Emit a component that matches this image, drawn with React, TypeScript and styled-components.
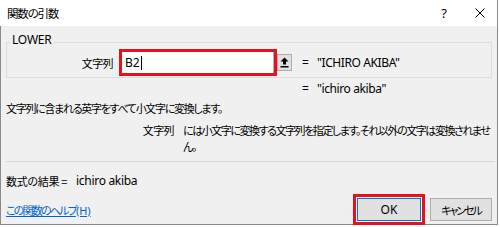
import React from "react";
import styled, { createGlobalStyle } from "styled-components";

const Global = createGlobalStyle`
  html, body { margin: 0; padding: 0; background: #ffffff; }
  body {
    font-family: "Noto Sans", "Noto Sans CJK JP", sans-serif;
    font-size: 12px;
    color: #000;
  }
`;

const jp = `
  font-family: "Noto Sans CJK JP", "Noto Sans", sans-serif;
  font-feature-settings: "palt";
  font-size: 11px;
`;

const Window = styled.div`
  width: 498px;
  height: 225px;
  box-sizing: border-box;
  display: flex;
  flex-direction: column;
  border-right: 1px solid #8a8a8a;
  border-bottom: 1px solid #8a8a8a;
  background: #f0f0f0;
`;

const TitleBar = styled.div`
  height: 26px;
  flex: none;
  display: flex;
  align-items: center;
  background: #fff;
  padding-left: 7px;
`;

const Title = styled.div`
  ${jp}
  font-size: 11.5px;
  letter-spacing: -1.2px;
  line-height: 14px;
  flex: 1;
`;

const HelpGlyph = styled.div`
  width: 28px;
  margin-right: 5px;
  text-align: center;
  font-size: 13px;
  line-height: 14px;
`;

const CloseBtn = styled.div`
  width: 34px;
  height: 26px;
  display: flex;
  align-items: center;
  justify-content: center;
`;

const Content = styled.div`
  flex: 1;
  border-left: 1px solid #8a8a8a;
  padding: 0 5px;
  display: flex;
  flex-direction: column;
`;

const GroupBox = styled.div`
  position: relative;
  margin-top: 16px;
  border: 1px solid #dcdcdc;
  padding: 6px 0 1px;
`;

const GroupLabel = styled.div`
  position: absolute;
  left: 3px;
  top: -10px;
  padding: 0 2px;
  background: #f0f0f0;
  line-height: 14px;
  font-size: 12px;
  letter-spacing: -0.2px;
`;

const ArgRow = styled.div`
  display: grid;
  grid-template-columns: 112px 158px 15px auto;
  align-items: center;
  height: 27px;
`;

const ArgLabel = styled.div`
  ${jp}
  letter-spacing: -0.6px;
  text-align: right;
  padding-right: 6px;
  line-height: 14px;
`;

const Highlight = styled.div<{ $pad?: number }>`
  border: 3px solid #e8101c;
  padding: ${(p) => p.$pad ?? 0}px;
  box-sizing: border-box;
`;

const InputBox = styled.div`
  height: 21px;
  background: #fff;
  border-right: 1px solid #b5b5b5;
  display: flex;
  align-items: center;
  padding-left: 3px;
  font-size: 12px;
`;

const Caret = styled.span`
  display: inline-block;
  width: 1px;
  height: 14px;
  background: #000;
  margin-left: 1px;
`;

const CollapseBtn = styled.div`
  width: 15px;
  height: 17px;
  box-sizing: border-box;
  border: 1px solid #adadad;
  background: #e1e1e1;
  display: flex;
  align-items: center;
  justify-content: center;
`;

const ValueLine = styled.div<{ $indent?: number; $top?: number }>`
  display: flex;
  align-items: center;
  margin-left: ${(p) => p.$indent ?? 0}px;
  margin-top: ${(p) => p.$top ?? 0}px;
  line-height: 14px;
  font-size: 12px;
  letter-spacing: -0.4px;
`;

const Eq = styled.span`
  width: 15px;
  flex: none;
`;

const Description = styled.div`
  ${jp}
  letter-spacing: -1.3px;
  line-height: 14px;
  margin-top: 5px;
`;

const ArgHelp = styled.div`
  display: grid;
  grid-template-columns: 177px auto;
  margin-top: 7px;
  line-height: 16px;
`;

const ArgHelpName = styled.div`
  ${jp}
  letter-spacing: -0.6px;
  text-align: right;
  padding-right: 9px;
`;

const ArgHelpText = styled.div`
  ${jp}
  letter-spacing: -1.45px;
  white-space: nowrap;
`;

const Separator = styled.div`
  height: 1px;
  background: #d7d7d7;
  margin-top: 7px;
  margin-right: -3px;
`;

const ResultLine = styled.div`
  display: flex;
  align-items: center;
  margin-top: 12px;
  line-height: 14px;
`;

const ResultLabel = styled.span`
  ${jp}
  letter-spacing: -0.3px;
`;

const ResultValue = styled.span`
  margin-left: 9px;
  font-size: 12px;
  letter-spacing: -0.3px;
`;

const Footer = styled.div`
  margin-top: 6px;
  height: 31px;
  display: flex;
  align-items: center;
  justify-content: space-between;
`;

const HelpLink = styled.a`
  ${jp}
  letter-spacing: -1.8px;
  color: #0066cc;
  text-decoration: underline;
  cursor: pointer;
`;

const AccessKey = styled.span`
  font-family: "Noto Sans", sans-serif;
  font-size: 11px;
  letter-spacing: 0;
`;

const Buttons = styled.div`
  display: flex;
  align-items: center;
  gap: 5px;
`;

const Button = styled.div<{ $default?: boolean }>`
  height: 23px;
  box-sizing: border-box;
  width: ${(p) => (p.$default ? 64 : 62)}px;
  border: 1px solid ${(p) => (p.$default ? "#0078d7" : "#adadad")};
  background: #e1e1e1;
  display: flex;
  align-items: center;
  justify-content: center;
  font-size: 12px;
`;

const ButtonJp = styled.span`
  ${jp}
  letter-spacing: -2px;
`;

export default function App() {
  return (
    <>
      <Global />
      <Window>
        <TitleBar>
          <Title>関数の引数</Title>
          <HelpGlyph>?</HelpGlyph>
          <CloseBtn>
            <svg width="10" height="10" viewBox="0 0 10 10">
              <path d="M0.5 0.5 L9.5 9.5 M9.5 0.5 L0.5 9.5" stroke="#000" strokeWidth="1" />
            </svg>
          </CloseBtn>
        </TitleBar>
        <Content>
          <GroupBox>
            <GroupLabel>LOWER</GroupLabel>
            <ArgRow>
              <ArgLabel>文字列</ArgLabel>
              <Highlight>
                <InputBox>
                  B2
                  <Caret />
                </InputBox>
              </Highlight>
              <CollapseBtn>
                <svg width="9" height="11" viewBox="0 0 9 11">
                  <path d="M4.5 0.5 L8.5 4.5 L6 4.5 L6 7.5 L3 7.5 L3 4.5 L0.5 4.5 Z" fill="#000" />
                  <rect x="0.5" y="9" width="8" height="1.5" fill="#000" />
                </svg>
              </CollapseBtn>
              <ValueLine $indent={10}>
                <Eq>=</Eq>
                <span>"ICHIRO AKIBA"</span>
              </ValueLine>
            </ArgRow>
          </GroupBox>
          <ValueLine $indent={296} $top={4}>
            <Eq>=</Eq>
            <span>"ichiro akiba"</span>
          </ValueLine>
          <Description>文字列に含まれる英字をすべて小文字に変換します。</Description>
          <ArgHelp>
            <ArgHelpName>文字列</ArgHelpName>
            <ArgHelpText>
              には小文字に変換する文字列を指定します。それ以外の文字は変換されませ
              <br />
              ん。
            </ArgHelpText>
          </ArgHelp>
          <Separator />
          <ResultLine>
            <ResultLabel>数式の結果 =</ResultLabel>
            <ResultValue>ichiro akiba</ResultValue>
          </ResultLine>
          <Footer>
            <HelpLink>
              この関数のヘルプ<AccessKey>(H)</AccessKey>
            </HelpLink>
            <Buttons>
              <Highlight $pad={1}>
                <Button $default>OK</Button>
              </Highlight>
              <Button>
                <ButtonJp>キャンセル</ButtonJp>
              </Button>
            </Buttons>
          </Footer>
        </Content>
      </Window>
    </>
  );
}
